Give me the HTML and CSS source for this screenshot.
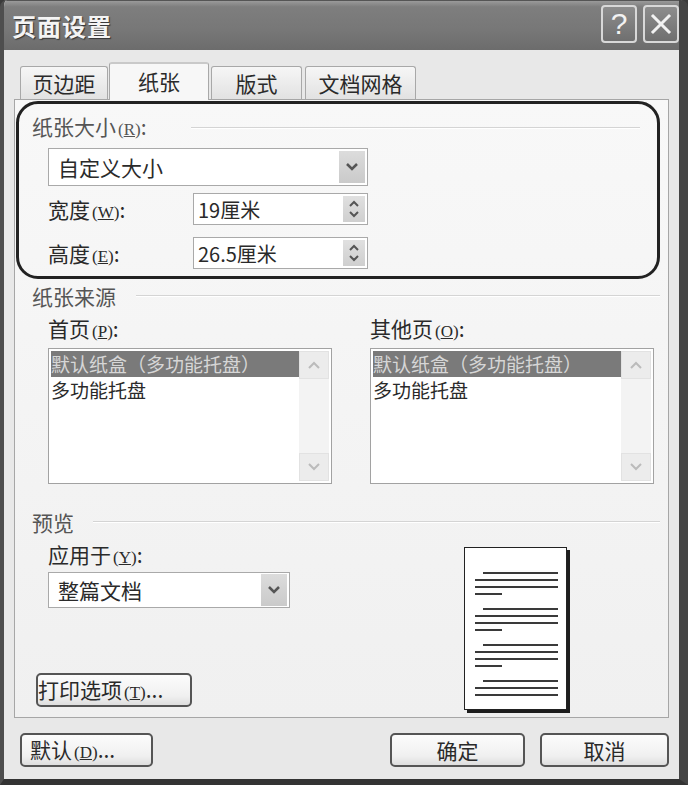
FILE: index.html
```html
<!DOCTYPE html>
<html lang="zh-CN">
<head>
    <meta charset="UTF-8">
    <title>页面设置</title>
    <link rel="stylesheet" href="styles.css">
</head>
<body>
    <div class="window">
        <div class="titlebar">
            <span class="title">页面设置</span>
            <div class="title-buttons">
                <span class="tbtn">?</span>
                <span class="tbtn">
                    <svg width="22" height="22" viewBox="0 0 22 22"><path d="M3 3 L19 19 M19 3 L3 19" stroke="#f2f2f2" stroke-width="3" stroke-linecap="square"/></svg>
                </span>
            </div>
        </div>

        <div class="body">
            <div class="tabs">
                <div class="tab tab-1">页边距</div>
                <div class="tab tab-2 active">纸张</div>
                <div class="tab tab-3">版式</div>
                <div class="tab tab-4">文档网格</div>
            </div>

            <div class="panel">
                <!-- paper size, ringed in the screenshot -->
                <div class="size-group">
                    <div class="group-title">
                        <span>纸张大小<span class="key">(<u>R</u>)</span>:</span>
                        <span class="rule rule-size"></span>
                    </div>
                    <div class="select select-size">
                        <span class="select-text">自定义大小</span>
                        <span class="drop-btn">
                            <svg width="14" height="10" viewBox="0 0 14 10"><path d="M2 2 L7 7 L12 2" fill="none" stroke="#555" stroke-width="2.5"/></svg>
                        </span>
                    </div>
                    <div class="field-row">
                        <span class="field-label">宽度<span class="key">(<u>W</u>)</span>:</span>
                        <div class="spin">
                            <span class="spin-text">19厘米</span>
                            <span class="spin-btn">
                                <svg width="12" height="20" viewBox="0 0 12 20"><path d="M2 7 L6 3 L10 7 M2 13 L6 17 L10 13" fill="none" stroke="#555" stroke-width="2"/></svg>
                            </span>
                        </div>
                    </div>
                    <div class="field-row field-row-2">
                        <span class="field-label">高度<span class="key">(<u>E</u>)</span>:</span>
                        <div class="spin">
                            <span class="spin-text">26.5厘米</span>
                            <span class="spin-btn">
                                <svg width="12" height="20" viewBox="0 0 12 20"><path d="M2 7 L6 3 L10 7 M2 13 L6 17 L10 13" fill="none" stroke="#555" stroke-width="2"/></svg>
                            </span>
                        </div>
                    </div>
                </div>

                <!-- paper source -->
                <div class="group source-group">
                    <div class="group-title">
                        <span>纸张来源</span>
                        <span class="rule rule-source"></span>
                    </div>
                    <div class="source-cols">
                        <div class="source-col">
                            <div class="sub-label">首页<span class="key">(<u>P</u>)</span>:</div>
                            <div class="listbox">
                                <div class="list-items">
                                    <div class="list-item selected">默认纸盒（多功能托盘）</div>
                                    <div class="list-item">多功能托盘</div>
                                </div>
                                <div class="scrollbar">
                                    <span class="scroll-btn"><svg width="14" height="10" viewBox="0 0 14 10"><path d="M2 8 L7 3 L12 8" fill="none" stroke="#bbb" stroke-width="2"/></svg></span>
                                    <span class="scroll-btn"><svg width="14" height="10" viewBox="0 0 14 10"><path d="M2 2 L7 7 L12 2" fill="none" stroke="#bbb" stroke-width="2"/></svg></span>
                                </div>
                            </div>
                        </div>
                        <div class="source-col">
                            <div class="sub-label">其他页<span class="key">(<u>O</u>)</span>:</div>
                            <div class="listbox">
                                <div class="list-items">
                                    <div class="list-item selected">默认纸盒（多功能托盘）</div>
                                    <div class="list-item">多功能托盘</div>
                                </div>
                                <div class="scrollbar">
                                    <span class="scroll-btn"><svg width="14" height="10" viewBox="0 0 14 10"><path d="M2 8 L7 3 L12 8" fill="none" stroke="#bbb" stroke-width="2"/></svg></span>
                                    <span class="scroll-btn"><svg width="14" height="10" viewBox="0 0 14 10"><path d="M2 2 L7 7 L12 2" fill="none" stroke="#bbb" stroke-width="2"/></svg></span>
                                </div>
                            </div>
                        </div>
                    </div>
                </div>

                <!-- preview -->
                <div class="group preview-group">
                    <div class="group-title">
                        <span>预览</span>
                        <span class="rule rule-preview"></span>
                    </div>
                    <div class="preview-body">
                        <div class="preview-left">
                            <div class="sub-label">应用于<span class="key">(<u>Y</u>)</span>:</div>
                            <div class="select select-apply">
                                <span class="select-text">整篇文档</span>
                                <span class="drop-btn">
                                    <svg width="14" height="10" viewBox="0 0 14 10"><path d="M2 2 L7 7 L12 2" fill="none" stroke="#555" stroke-width="2.5"/></svg>
                                </span>
                            </div>
                            <button class="btn btn-print">打印选项<span class="key">(<u>T</u>)</span>...</button>
                        </div>
                        <div class="page">
                            <div class="para">
                                <span class="line indent"></span>
                                <span class="line"></span>
                                <span class="line"></span>
                                <span class="line short"></span>
                            </div>
                            <div class="para">
                                <span class="line indent"></span>
                                <span class="line"></span>
                                <span class="line"></span>
                                <span class="line short"></span>
                            </div>
                            <div class="para">
                                <span class="line indent"></span>
                                <span class="line"></span>
                                <span class="line"></span>
                                <span class="line short"></span>
                            </div>
                            <div class="para">
                                <span class="line indent"></span>
                                <span class="line"></span>
                                <span class="line"></span>
                            </div>
                        </div>
                    </div>
                </div>
            </div>

            <div class="footer-buttons">
                <button class="btn btn-default">默认<span class="key">(<u>D</u>)</span>...</button>
                <div class="footer-right">
                    <button class="btn btn-ok">确定</button>
                    <button class="btn btn-cancel">取消</button>
                </div>
            </div>
        </div>
    </div>
</body>
</html>
```

FILE: styles.css
```css
* {
    margin: 0;
    padding: 0;
    box-sizing: border-box;
}

body {
    background-color: #3a3a3a;
    font-family: "Noto Sans CJK SC", "Noto Sans", sans-serif;
    color: #2a2a2a;
    font-size: 21px;
}

.window {
    width: 688px;
    height: 785px;
    background-color: #e8e8e8;
    border-left: 4px solid #4e4e4e;
    border-right: 9px solid #444;
    border-bottom: 6px solid #333;
    border-radius: 7px 7px 0 0;
    overflow: hidden;
    display: flex;
    flex-direction: column;
}

.titlebar {
    height: 50px;
    flex-shrink: 0;
    margin-left: -4px;
    margin-right: -9px;
    padding: 0 9px 0 12px;
    background: linear-gradient(#9a9a9a 0, #7e7e7e 12%, #777 60%, #6c6c6c 100%);
    border-top: 1px solid #555;
    display: flex;
    align-items: center;
    justify-content: space-between;
}

.title {
    font-size: 24px;
    font-weight: 700;
    color: #f4f4f4;
    text-shadow: 1px 1px 1px #333;
    letter-spacing: 1px;
}

.title-buttons {
    display: flex;
    gap: 6px;
    margin-top: -4px;
}

.tbtn {
    width: 36px;
    height: 38px;
    border: 2px solid #d8d8d8;
    border-radius: 4px;
    background: linear-gradient(#8d8d8d, #6f6f6f);
    color: #f2f2f2;
    font-family: "Liberation Sans", sans-serif;
    font-size: 30px;
    line-height: 32px;
    text-align: center;
    display: flex;
    align-items: center;
    justify-content: center;
}

.body {
    flex: 1;
    padding: 0 10px;
    display: flex;
    flex-direction: column;
}

/* tabs */

.tabs {
    display: flex;
    align-items: flex-end;
    height: 49px;
    padding-left: 6px;
}

.tab {
    height: 33px;
    border: 1px solid #a8a8a8;
    border-bottom: none;
    border-radius: 3px 3px 0 0;
    background: linear-gradient(#f6f6f6, #e2e2e2);
    text-align: center;
    line-height: 32px;
    margin-right: 3px;
}

.tab-1 { width: 88px; }
.tab-2 { width: 100px; }
.tab-3 { width: 91px; }
.tab-4 { width: 111px; }

.tab.active {
    height: 38px;
    line-height: 34px;
    background: #f7f7f7;
    border-top: 2px solid #c9c9c9;
    margin: 0 2px -1px -2px;
    position: relative;
    z-index: 1;
}

.panel {
    height: 619px;
    border: 1px solid #a6a6a6;
    background: linear-gradient(#f8f8f8, #f0f0f0);
    padding-right: 8px;
}

/* ringed paper size group */

.size-group {
    margin: 1px 0 0 1px;
    height: 178px;
    border: 3px solid #222;
    border-radius: 22px;
    padding: 11px 17px 0 13px;
}

.group-title {
    display: flex;
    align-items: center;
    height: 26px;
    line-height: 26px;
    color: #555;
}

.rule {
    flex: 1;
    height: 2px;
    border-top: 1px solid #d4d4d4;
    border-bottom: 1px solid #fff;
}

.rule-size { margin-left: 44px; }
.rule-source { margin-left: 20px; }
.rule-preview { margin-left: 19px; }

.key {
    font-size: 17px;
    font-family: "Liberation Serif", serif;
    margin-left: 2px;
}

.select {
    display: flex;
    align-items: center;
    justify-content: space-between;
    border: 1px solid #a9a9a9;
    background: #fff;
    padding: 2px 2px 2px 9px;
}

.select-size {
    width: 320px;
    height: 38px;
    margin: 7px 0 0 16px;
}

.drop-btn {
    width: 26px;
    height: 32px;
    background: linear-gradient(#dcdcdc, #cacaca);
    display: flex;
    align-items: center;
    justify-content: center;
}

.field-row {
    display: flex;
    align-items: center;
    margin: 7px 0 0 16px;
}

.field-row-2 {
    margin-top: 12px;
}

.field-label {
    width: 145px;
}

.spin {
    width: 175px;
    height: 32px;
    border: 1px solid #a9a9a9;
    background: #fff;
    display: flex;
    align-items: center;
    justify-content: space-between;
    padding: 2px 2px 2px 4px;
}

.spin-text {
    font-size: 20px;
}

.spin-btn {
    width: 22px;
    height: 26px;
    background: linear-gradient(#e0e0e0, #cfcfcf);
    display: flex;
    align-items: center;
    justify-content: center;
}

/* plain groups */

.group {
    padding-left: 17px;
}

.source-group {
    margin-top: 4px;
}

.source-cols {
    display: flex;
    padding-left: 16px;
    gap: 38px;
}

.source-col {
    width: 284px;
}

.sub-label {
    height: 26px;
    line-height: 26px;
    margin-top: 6px;
}

.listbox {
    margin-top: 7px;
    height: 136px;
    border: 1px solid #a2a2a2;
    background: #fff;
    padding: 2px;
    display: flex;
}

.list-items {
    flex: 1;
}

.list-item {
    height: 26px;
    line-height: 26px;
    font-size: 19px;
    white-space: nowrap;
}

.list-item.selected {
    background: #7a7a7a;
    color: #d6d6d6;
}

.scrollbar {
    width: 30px;
    background: #f3f3f3;
    display: flex;
    flex-direction: column;
    justify-content: space-between;
}

.scroll-btn {
    height: 28px;
    background: #ececec;
    border: 1px solid #e2e2e2;
    display: flex;
    align-items: center;
    justify-content: center;
}

.preview-group {
    margin-top: 25px;
}

.preview-body {
    display: flex;
}

.preview-left {
    width: 432px;
    padding-left: 16px;
    display: flex;
    flex-direction: column;
}

.select-apply {
    width: 242px;
    height: 36px;
    margin-top: 5px;
}

.btn {
    font-family: "Noto Sans CJK SC", "Noto Sans", sans-serif;
    font-size: 21px;
    color: #2a2a2a;
    height: 34px;
    border: 2px solid #555;
    border-radius: 5px;
    background: linear-gradient(#fcfcfc, #f0f0f0 70%, #dedede);
    line-height: 28px;
}

.btn-print {
    width: 156px;
    margin: 65px 0 0 -12px;
    text-align: left;
    padding-left: 0;
}

.page {
    width: 103px;
    height: 163px;
    margin-top: 12px;
    background: #fff;
    border: 1px solid #222;
    box-shadow: 3px 3px 0 #1e1e1e;
    padding: 24px 8px 0 10px;
    display: flex;
    flex-direction: column;
    gap: 13px;
}

.para {
    display: flex;
    flex-direction: column;
    gap: 5px;
}

.line {
    display: block;
    height: 2px;
    background: #3a3a3a;
}

.line.indent {
    margin-left: 8px;
}

.line.short {
    width: 27px;
}

/* bottom buttons */

.footer-buttons {
    display: flex;
    justify-content: space-between;
    margin-top: 15px;
    padding-left: 6px;
}

.btn-default {
    width: 133px;
    text-align: left;
    padding-left: 8px;
}

.footer-right {
    display: flex;
    gap: 15px;
}

.btn-ok {
    width: 135px;
}

.btn-cancel {
    width: 129px;
}
```
